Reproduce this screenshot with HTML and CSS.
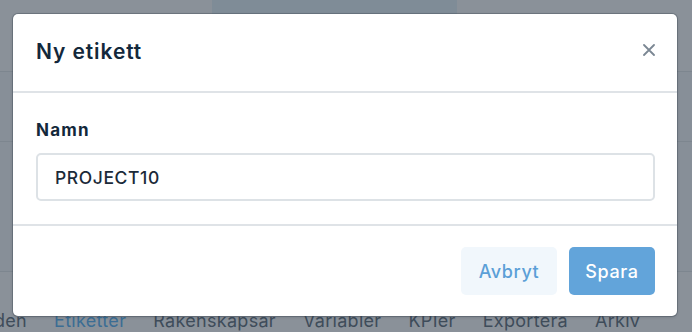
FILE: index.html
```html
<!DOCTYPE html>
<html lang="sv">
<head>
<meta charset="utf-8">
<title>Ny etikett</title>
<link rel="stylesheet" href="styles.css">
</head>
<body>
<div class="page">
  <div class="top-band">
    <div class="top-tab"></div>
  </div>
  <div class="row row-a"></div>
  <div class="row row-b"></div>
  <nav class="tabs">
    <span class="tab cut">den</span>
    <span class="tab active">Etiketter</span>
    <span class="tab">Räkenskapsar</span>
    <span class="tab">Variabler</span>
    <span class="tab">KPIer</span>
    <span class="tab">Exportera</span>
    <span class="tab">Arkiv</span>
  </nav>

  <div class="modal" role="dialog" aria-labelledby="modal-title">
    <header class="modal-header">
      <h2 id="modal-title" class="modal-title">Ny etikett</h2>
      <button class="close" aria-label="Stäng">
        <svg width="12" height="12" viewBox="0 0 12 12" aria-hidden="true">
          <path d="M1 1 L11 11 M11 1 L1 11" stroke="currentColor" stroke-width="1.8" stroke-linecap="round" fill="none"/>
        </svg>
      </button>
    </header>
    <section class="modal-body">
      <label class="field-label" for="name">Namn</label>
      <input id="name" class="field-input" type="text" value="PROJECT10">
    </section>
    <footer class="modal-footer">
      <button class="btn btn-cancel">Avbryt</button>
      <button class="btn btn-save">Spara</button>
    </footer>
  </div>
</div>
</body>
</html>
```

FILE: styles.css
```css
* { box-sizing: border-box; }

html, body {
  margin: 0;
  padding: 0;
}

body {
  width: 692px;
  height: 332px;
  overflow: hidden;
  font-family: Inter, "Noto Sans", "DejaVu Sans", sans-serif;
  background: #8a9199;
}

.page {
  position: relative;
  width: 692px;
  height: 332px;
  display: flex;
  flex-direction: column;
}

.top-band {
  height: 72px;
  border-bottom: 1px solid #7d868f;
  background: #8a9199;
}

.top-tab {
  margin-left: 212px;
  width: 245px;
  height: 40px;
  background: #7f8c97;
  border-radius: 0 0 14px 14px;
}

.row {
  background: #878f98;
  border-bottom: 1px solid #7d868f;
}

.row-a { height: 70px; }
.row-b { height: 130px; }

.tabs {
  flex: 1;
  display: flex;
  align-items: flex-end;
  gap: 27px;
  padding: 0 0 1px 0;
  margin-left: -6px;
  background: #8a9199;
  font-size: 18px;
  color: #3e4c5a;
  letter-spacing: 0.3px;
  white-space: nowrap;
}

.tab { line-height: 21px; }
.tab.active { color: #3b6d94; }

.modal {
  position: absolute;
  left: 13px;
  top: 14px;
  width: 664px;
  height: 302px;
  background: #ffffff;
  border-radius: 5px;
  box-shadow: 0 0 0 1px rgba(60, 72, 84, 0.35), 0 1px 3px rgba(30, 40, 50, 0.25);
  display: flex;
  flex-direction: column;
  overflow: hidden;
}

.modal-header {
  height: 79px;
  display: flex;
  align-items: center;
  justify-content: space-between;
  padding: 0 22px 2px 23px;
  border-bottom: 2px solid #dfe3e7;
}

.modal-title {
  margin: 0;
  font-size: 21px;
  font-weight: 600;
  letter-spacing: 0.9px;
  color: #13283b;
}

.close {
  border: 0;
  background: none;
  padding: 0;
  width: 12px;
  height: 12px;
  color: #7b8793;
  display: flex;
  margin-top: -4px;
}

.modal-body {
  height: 133px;
  padding: 27px 22px 0 23px;
  border-bottom: 2px solid #dfe3e7;
  display: flex;
  flex-direction: column;
}

.field-label {
  font-size: 17px;
  font-weight: 700;
  letter-spacing: 1.2px;
  color: #13283b;
  line-height: 21px;
  margin-bottom: 12px;
}

.field-input {
  width: 619px;
  height: 48px;
  border: 2px solid #dde2e6;
  border-radius: 5px;
  padding: 0 0 0 17px;
  font-family: inherit;
  font-size: 17.5px;
  font-weight: 500;
  letter-spacing: 0.6px;
  color: #1b2a39;
  outline: none;
  background: #fff;
}

.modal-footer {
  flex: 1;
  display: flex;
  justify-content: flex-end;
  align-items: flex-start;
  gap: 12px;
  padding: 21px 22px 0 0;
}

.btn {
  height: 48px;
  border: 0;
  border-radius: 5px;
  font-family: inherit;
  font-size: 18px;
  font-weight: 500;
  letter-spacing: 0.6px;
  cursor: pointer;
}

.btn-cancel {
  width: 96px;
  background: #f1f7fc;
  color: #5b9fd7;
}

.btn-save {
  width: 86px;
  background: #62a4da;
  color: #ffffff;
}
```
